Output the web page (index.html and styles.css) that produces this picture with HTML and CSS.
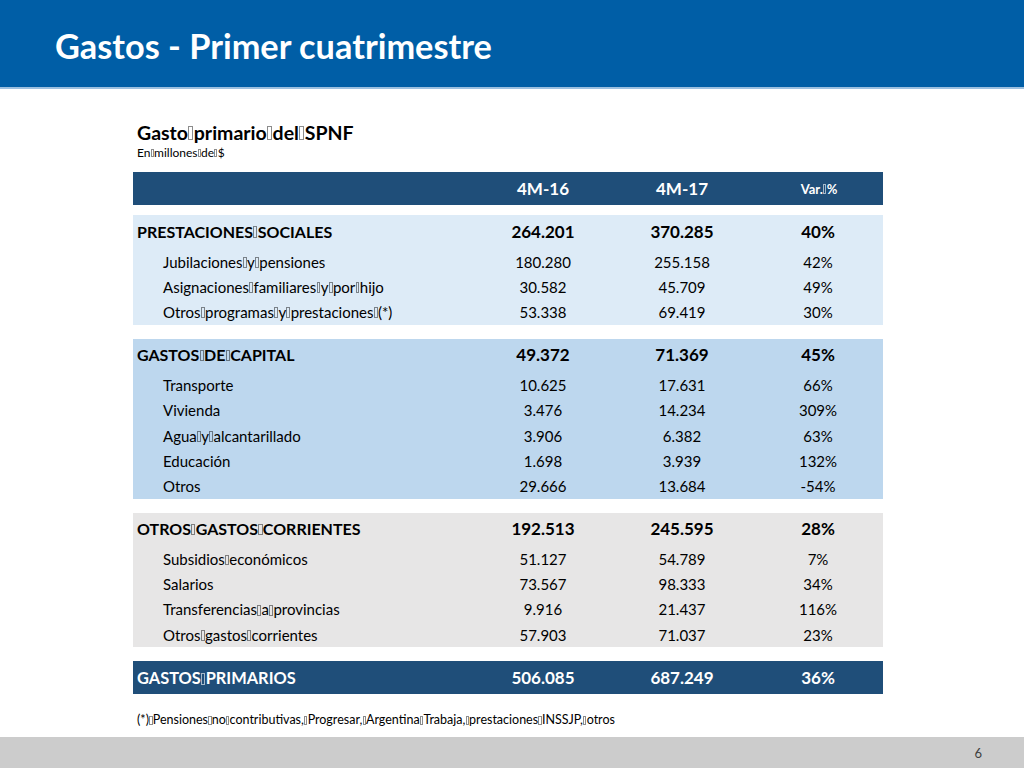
FILE: index.html
```html
<!DOCTYPE html>
<html lang="es">
<head>
<meta charset="utf-8">
<title>Gastos - Primer cuatrimestre</title>
<link rel="stylesheet" href="styles.css">
</head>
<body>
<header class="band"><h1>Gastos - Primer cuatrimestre</h1></header>
<main class="content">
  <div class="caption">
    <h2>Gasto<span class="tf">&nbsp;</span>primario<span class="tf">&nbsp;</span>del<span class="tf">&nbsp;</span>SPNF</h2>
    <p>En<span class="tf">&nbsp;</span>millones<span class="tf">&nbsp;</span>de<span class="tf">&nbsp;</span>$</p>
  </div>
  <div class="table">
    <div class="row head"><span class="label"></span><span class="num">4M-16</span><span class="num">4M-17</span><span class="num small">Var.<span class="tf">&nbsp;</span>%</span></div>

    <section class="group g1">
      <div class="row main"><span class="label">PRESTACIONES<span class="tf">&nbsp;</span>SOCIALES</span><span class="num">264.201</span><span class="num">370.285</span><span class="num">40%</span></div>
      <div class="row sub"><span class="label">Jubilaciones<span class="tf">&nbsp;</span>y<span class="tf">&nbsp;</span>pensiones</span><span class="num">180.280</span><span class="num">255.158</span><span class="num">42%</span></div>
      <div class="row sub"><span class="label">Asignaciones<span class="tf">&nbsp;</span>familiares<span class="tf">&nbsp;</span>y<span class="tf">&nbsp;</span>por<span class="tf">&nbsp;</span>hijo</span><span class="num">30.582</span><span class="num">45.709</span><span class="num">49%</span></div>
      <div class="row sub"><span class="label">Otros<span class="tf">&nbsp;</span>programas<span class="tf">&nbsp;</span>y<span class="tf">&nbsp;</span>prestaciones<span class="tf">&nbsp;</span>(*)</span><span class="num">53.338</span><span class="num">69.419</span><span class="num">30%</span></div>
    </section>

    <section class="group g2">
      <div class="row main"><span class="label">GASTOS<span class="tf">&nbsp;</span>DE<span class="tf">&nbsp;</span>CAPITAL</span><span class="num">49.372</span><span class="num">71.369</span><span class="num">45%</span></div>
      <div class="row sub"><span class="label">Transporte</span><span class="num">10.625</span><span class="num">17.631</span><span class="num">66%</span></div>
      <div class="row sub"><span class="label">Vivienda</span><span class="num">3.476</span><span class="num">14.234</span><span class="num">309%</span></div>
      <div class="row sub"><span class="label">Agua<span class="tf">&nbsp;</span>y<span class="tf">&nbsp;</span>alcantarillado</span><span class="num">3.906</span><span class="num">6.382</span><span class="num">63%</span></div>
      <div class="row sub"><span class="label">Educación</span><span class="num">1.698</span><span class="num">3.939</span><span class="num">132%</span></div>
      <div class="row sub"><span class="label">Otros</span><span class="num">29.666</span><span class="num">13.684</span><span class="num">-54%</span></div>
    </section>

    <section class="group g3">
      <div class="row main"><span class="label">OTROS<span class="tf">&nbsp;</span>GASTOS<span class="tf">&nbsp;</span>CORRIENTES</span><span class="num">192.513</span><span class="num">245.595</span><span class="num">28%</span></div>
      <div class="row sub"><span class="label">Subsidios<span class="tf">&nbsp;</span>económicos</span><span class="num">51.127</span><span class="num">54.789</span><span class="num">7%</span></div>
      <div class="row sub"><span class="label">Salarios</span><span class="num">73.567</span><span class="num">98.333</span><span class="num">34%</span></div>
      <div class="row sub"><span class="label">Transferencias<span class="tf">&nbsp;</span>a<span class="tf">&nbsp;</span>provincias</span><span class="num">9.916</span><span class="num">21.437</span><span class="num">116%</span></div>
      <div class="row sub"><span class="label">Otros<span class="tf">&nbsp;</span>gastos<span class="tf">&nbsp;</span>corrientes</span><span class="num">57.903</span><span class="num">71.037</span><span class="num">23%</span></div>
    </section>

    <div class="row total"><span class="label">GASTOS<span class="tf">&nbsp;</span>PRIMARIOS</span><span class="num">506.085</span><span class="num">687.249</span><span class="num">36%</span></div>
  </div>
  <p class="note">(*)<span class="tf">&nbsp;</span>Pensiones<span class="tf">&nbsp;</span>no<span class="tf">&nbsp;</span>contributivas,<span class="tf">&nbsp;</span>Progresar,<span class="tf">&nbsp;</span>Argentina<span class="tf">&nbsp;</span>Trabaja,<span class="tf">&nbsp;</span>prestaciones<span class="tf">&nbsp;</span>INSSJP,<span class="tf">&nbsp;</span>otros</p>
</main>
<footer class="foot"><span class="page">6</span></footer>
</body>
</html>
```
FILE: styles.css
```css
* { box-sizing: border-box; }
html, body { margin: 0; padding: 0; }
body {
  width: 1024px;
  height: 768px;
  display: flex;
  flex-direction: column;
  background: #ffffff;
  font-family: Lato, "Open Sans", "Liberation Sans", sans-serif;
  color: #000;
  overflow: hidden;
}

.band {
  height: 89px;
  background: #005ea6;
  border-bottom: 2px solid #9cc0e0;
  padding: 26px 0 0 55px;
}
.band h1 {
  margin: 0;
  font-size: 34.3px;
  line-height: 40px;
  font-weight: 700;
  color: #ffffff;
}

.content {
  padding-left: 133px;
}
.caption {
  padding: 31px 0 0 4px;
}
.caption h2 {
  margin: 0;
  font-size: 19.5px;
  line-height: 25px;
  font-weight: 700;
}
.caption p {
  margin: 0;
  font-size: 12px;
  line-height: 15px;
}

.tf {
  display: inline-block;
  width: 0.26em;
  height: 0.72em;
  border: 1px solid rgba(0,0,0,0.45);
  vertical-align: -0.02em;
  overflow: hidden;
  margin: 0 0.02em;
  line-height: 0;
}
.head .tf, .total .tf { border-color: rgba(255,255,255,0.6); }

.table {
  width: 750px;
  margin-top: 12px;
  display: flex;
  flex-direction: column;
}
.row {
  display: grid;
  grid-template-columns: 342px 136px 142px 130px;
  align-items: center;
}
.num { text-align: center; }

.head, .total {
  height: 33px;
  background: #1f4e79;
  color: #ffffff;
  font-weight: 700;
  font-size: 17px;
}
.head .small { font-size: 13px; font-weight: 700; padding-left: 2px; }
.total > .label { padding-left: 4px; font-size: 16.4px; }

.group {
  margin-top: 10px;
  display: flex;
  flex-direction: column;
}
.group + .group { margin-top: 14px; }
.total { margin-top: 14px; }
.g1 { background: #ddebf7; }
.g2 { background: #bdd7ee; }
.g3 { background: #e7e6e6; }

.main {
  height: 34px;
  padding-bottom: 2px;
  font-size: 16px;
  font-weight: 700;
}
.main > .label { padding-left: 4px; }
.main > .num { font-size: 17px; }
.sub {
  height: 25.2px;
  font-size: 15px;
}
.sub > .label { padding-left: 30px; }

.note {
  margin: 18px 0 0 0;
  padding-left: 4px;
  font-size: 12.5px;
  line-height: 16px;
}

.foot {
  margin-top: auto;
  height: 31px;
  background: #cccccc;
  display: flex;
  justify-content: flex-end;
  align-items: center;
  padding-right: 42px;
}
.page {
  font-size: 13px;
  color: #404040;
}
```
